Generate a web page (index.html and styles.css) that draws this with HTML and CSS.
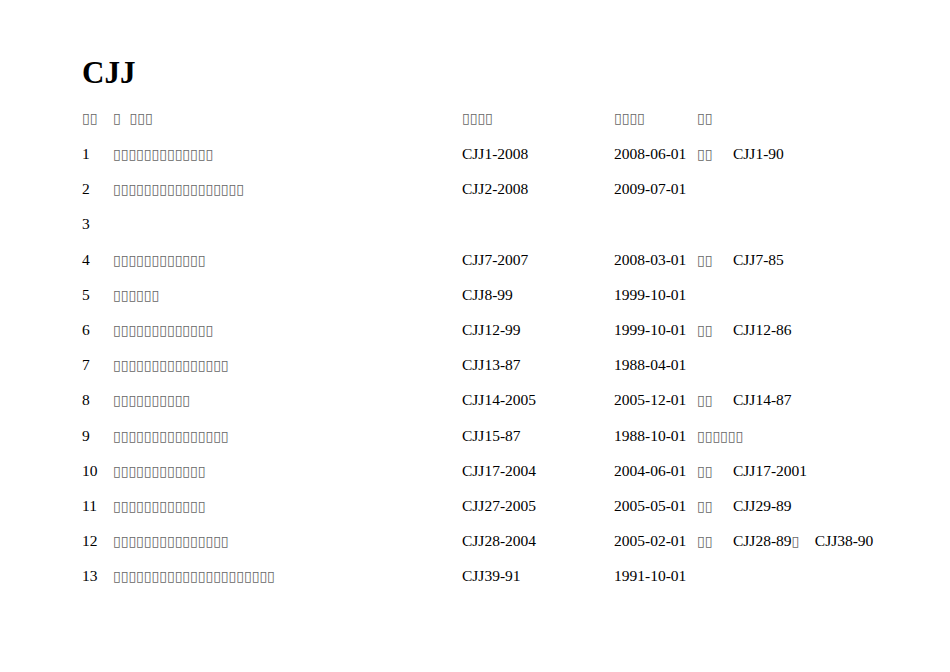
FILE: index.html
```html
<!DOCTYPE html>
<html>
<head>
<meta charset="utf-8">
<link rel="stylesheet" href="styles.css">
</head>
<body>
<h1 class="title">CJJ</h1>
<div class="table">
  <div class="row head"><span class="no"><span class="cjk">▯▯</span></span><span class="name"><span class="cjk">▯&nbsp;&nbsp;▯▯▯</span></span><span class="code"><span class="cjk">▯▯▯▯</span></span><span class="date"><span class="cjk">▯▯▯▯</span></span><span class="note"><span class="cjk">▯▯</span></span><span class="old"></span></div>
  <div class="row"><span class="no">1</span><span class="name"><span class="cjk">▯▯▯▯▯▯▯▯▯▯▯▯▯</span></span><span class="code">CJJ1-2008</span><span class="date">2008-06-01</span><span class="note"><span class="cjk">▯▯</span></span><span class="old">CJJ1-90</span></div>
  <div class="row"><span class="no">2</span><span class="name"><span class="cjk">▯▯▯▯▯▯▯▯▯▯▯▯▯▯▯▯▯</span></span><span class="code">CJJ2-2008</span><span class="date">2009-07-01</span><span class="note"></span><span class="old"></span></div>
  <div class="row"><span class="no">3</span><span class="name"></span><span class="code"></span><span class="date"></span><span class="note"></span><span class="old"></span></div>
  <div class="row"><span class="no">4</span><span class="name"><span class="cjk">▯▯▯▯▯▯▯▯▯▯▯▯</span></span><span class="code">CJJ7-2007</span><span class="date">2008-03-01</span><span class="note"><span class="cjk">▯▯</span></span><span class="old">CJJ7-85</span></div>
  <div class="row"><span class="no">5</span><span class="name"><span class="cjk">▯▯▯▯▯▯</span></span><span class="code">CJJ8-99</span><span class="date">1999-10-01</span><span class="note"></span><span class="old"></span></div>
  <div class="row"><span class="no">6</span><span class="name"><span class="cjk">▯▯▯▯▯▯▯▯▯▯▯▯▯</span></span><span class="code">CJJ12-99</span><span class="date">1999-10-01</span><span class="note"><span class="cjk">▯▯</span></span><span class="old">CJJ12-86</span></div>
  <div class="row"><span class="no">7</span><span class="name"><span class="cjk">▯▯▯▯▯▯▯▯▯▯▯▯▯▯▯</span></span><span class="code">CJJ13-87</span><span class="date">1988-04-01</span><span class="note"></span><span class="old"></span></div>
  <div class="row"><span class="no">8</span><span class="name"><span class="cjk">▯▯▯▯▯▯▯▯▯▯</span></span><span class="code">CJJ14-2005</span><span class="date">2005-12-01</span><span class="note"><span class="cjk">▯▯</span></span><span class="old">CJJ14-87</span></div>
  <div class="row"><span class="no">9</span><span class="name"><span class="cjk">▯▯▯▯▯▯▯▯▯▯▯▯▯▯▯</span></span><span class="code">CJJ15-87</span><span class="date">1988-10-01</span><span class="note wide"><span class="cjk">▯▯▯▯▯▯</span></span></div>
  <div class="row"><span class="no">10</span><span class="name"><span class="cjk">▯▯▯▯▯▯▯▯▯▯▯▯</span></span><span class="code">CJJ17-2004</span><span class="date">2004-06-01</span><span class="note"><span class="cjk">▯▯</span></span><span class="old">CJJ17-2001</span></div>
  <div class="row"><span class="no">11</span><span class="name"><span class="cjk">▯▯▯▯▯▯▯▯▯▯▯▯</span></span><span class="code">CJJ27-2005</span><span class="date">2005-05-01</span><span class="note"><span class="cjk">▯▯</span></span><span class="old">CJJ29-89</span></div>
  <div class="row"><span class="no">12</span><span class="name"><span class="cjk">▯▯▯▯▯▯▯▯▯▯▯▯▯▯▯</span></span><span class="code">CJJ28-2004</span><span class="date">2005-02-01</span><span class="note"><span class="cjk">▯▯</span></span><span class="old">CJJ28-89<span class="cjk">▯</span>&nbsp;&nbsp;&nbsp;&nbsp;CJJ38-90</span></div>
  <div class="row"><span class="no">13</span><span class="name"><span class="cjk">▯▯▯▯▯▯▯▯▯▯▯▯▯▯▯▯▯▯▯▯▯</span></span><span class="code">CJJ39-91</span><span class="date">1991-10-01</span><span class="note"></span><span class="old"></span></div>
</div>
</body>
</html>
```

FILE: styles.css
```css
html, body {
  margin: 0;
  padding: 0;
  background: #ffffff;
}

body {
  padding: 52px 0 0 82px;
  font-family: "Liberation Serif", "Times New Roman", serif;
  color: #000000;
}

.title {
  margin: 0;
  font-size: 31px;
  font-weight: bold;
  line-height: 42px;
}

.table {
  margin-top: 5px;
  display: grid;
  grid-template-rows: 37.5px;
  grid-auto-rows: 35.2px;
}

.row {
  display: grid;
  grid-template-columns: 31px 349px 152px 83px 36px auto;
  align-items: center;
  font-size: 15.5px;
  line-height: 18px;
  white-space: nowrap;
}

.cjk {
  font-family: "DejaVu Sans", sans-serif;
  font-size: 14px;
  color: #666666;
}

.note.wide {
  grid-column: 5 / 7;
}
```
